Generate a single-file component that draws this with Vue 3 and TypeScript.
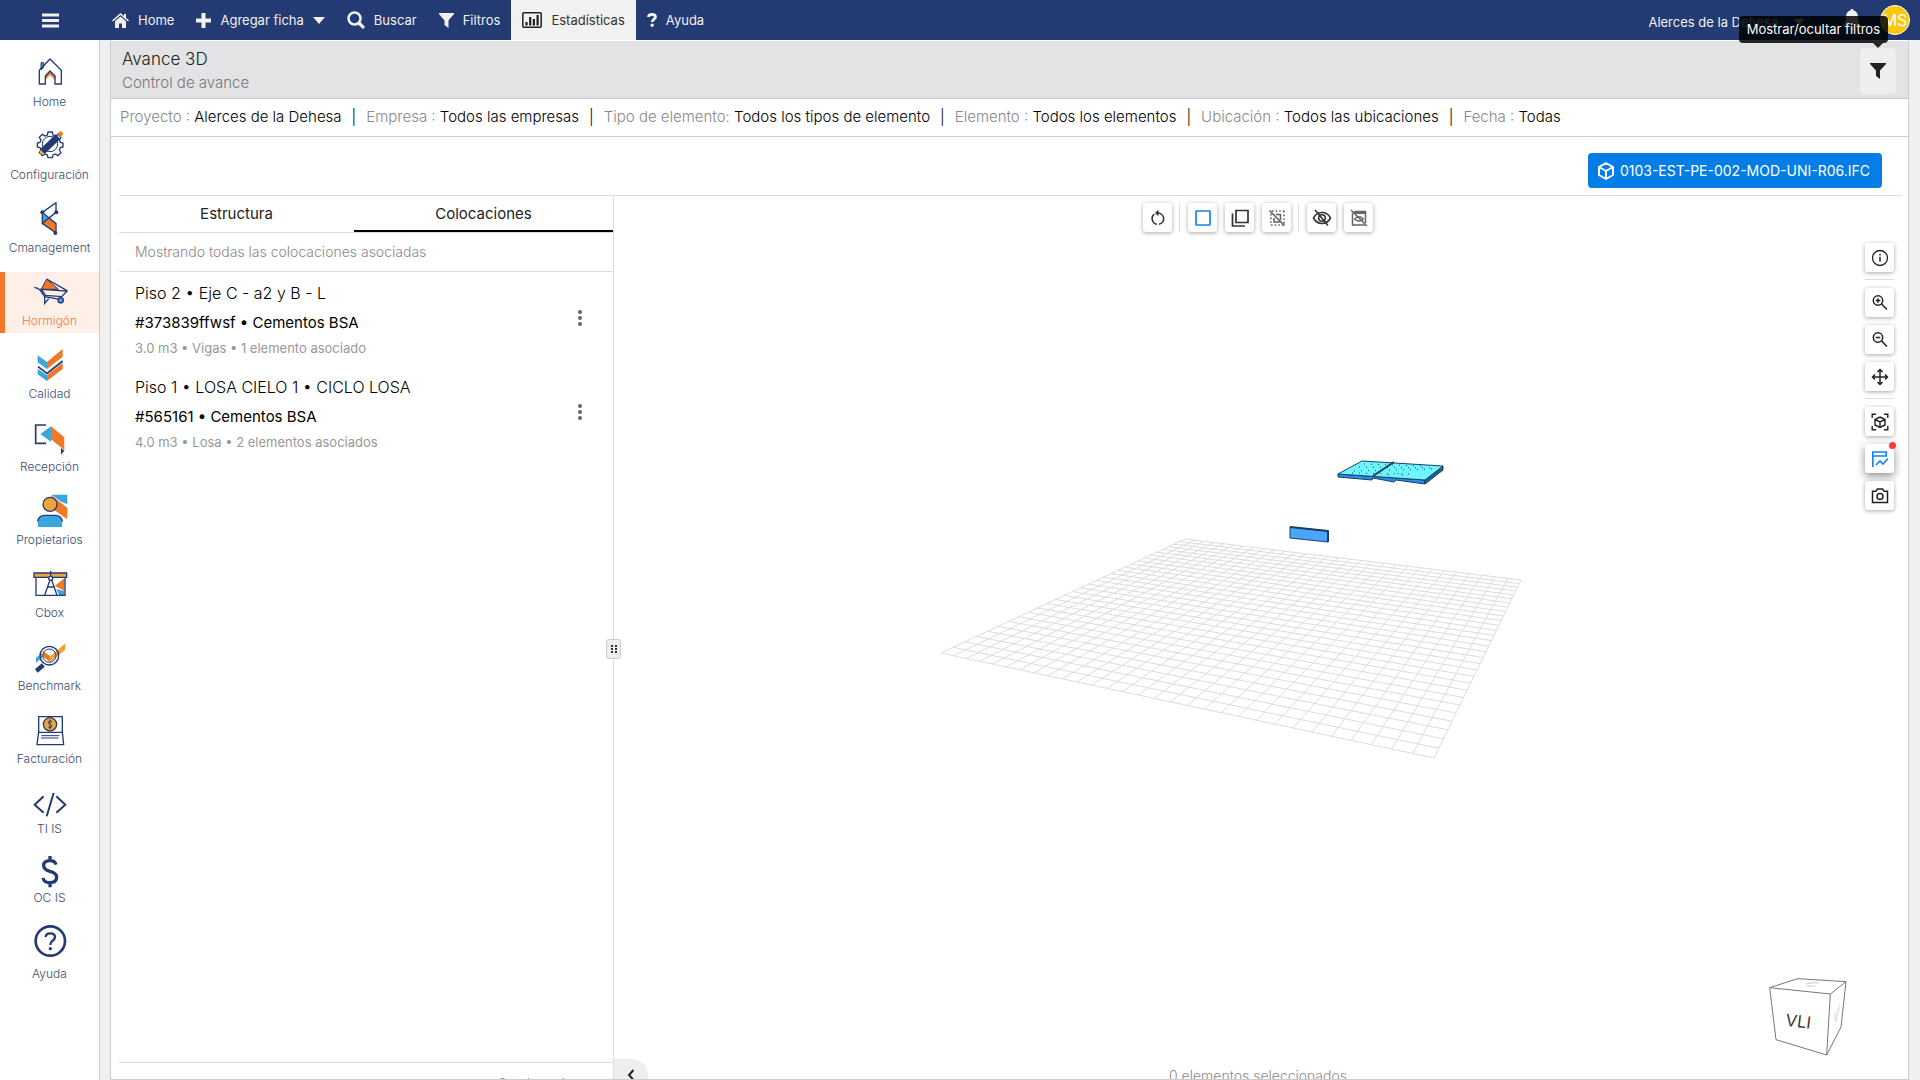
<script setup lang="ts">
import { ref } from 'vue'

interface FilterItem { label: string; value: string }
interface Placement { id: number; title: string; code: string; meta: string }
type Point = [number, number]

const filters: FilterItem[] = [
  { label: 'Proyecto :', value: 'Alerces de la Dehesa' },
  { label: 'Empresa :', value: 'Todos las empresas' },
  { label: 'Tipo de elemento:', value: 'Todos los tipos de elemento' },
  { label: 'Elemento :', value: 'Todos los elementos' },
  { label: 'Ubicación :', value: 'Todos las ubicaciones' },
  { label: 'Fecha :', value: 'Todas' },
]

const placements: Placement[] = [
  { id: 1, title: 'Piso 2 • Eje C - a2 y B - L', code: '#373839ffwsf • Cementos BSA', meta: '3.0 m3 • Vigas • 1 elemento asociado' },
  { id: 2, title: 'Piso 1 • LOSA CIELO 1 • CICLO LOSA', code: '#565161 • Cementos BSA', meta: '4.0 m3 • Losa • 2 elementos asociados' },
]

const activeTab = ref<'estructura' | 'colocaciones'>('colocaciones')

/* Projects a point of the unit square onto the floor plane seen in perspective. */
const floor: [Point, Point, Point, Point] = [[571, 343], [907, 384], [820, 562], [327, 457]]
function project(u: number, v: number): string {
  const [a, b, c, d] = floor
  const dx1 = b[0] - c[0], dx2 = d[0] - c[0], dx3 = a[0] - b[0] + c[0] - d[0]
  const dy1 = b[1] - c[1], dy2 = d[1] - c[1], dy3 = a[1] - b[1] + c[1] - d[1]
  const det = dx1 * dy2 - dx2 * dy1
  const g = (dx3 * dy2 - dx2 * dy3) / det
  const h = (dx1 * dy3 - dx3 * dy1) / det
  const w = g * u + h * v + 1
  const x = ((b[0] - a[0] + g * b[0]) * u + (d[0] - a[0] + h * d[0]) * v + a[0]) / w
  const y = ((b[1] - a[1] + g * b[1]) * u + (d[1] - a[1] + h * d[1]) * v + a[1]) / w
  return `${x.toFixed(1)} ${y.toFixed(1)}`
}
const cells = 30
const gridPath = Array.from({ length: cells + 1 }, (_, i) => {
  const t = i / cells
  return `M${project(t, 0)}L${project(t, 1)}M${project(0, t)}L${project(1, t)}`
}).join('')
</script>

<template>
  <div class="app">
    <header class="topbar">
      <button class="menu-btn" aria-label="Menú">
        <svg width="17" height="17" viewBox="0 0 17 17"><path d="M0 3h17M0 8.500h17M0 14h17" stroke="#f1f1f1" stroke-width="3" /></svg>
      </button>
      <nav class="topnav">
        <a href="#" class="nav-item">
          <svg width="17" height="15" viewBox="0 0 17 15"><path d="M8.500 0 0 7.500l1 1L8.500 2 16 8.500l1-1-3-2.700V1h-2v2zM8.500 3.500 3 8.300V15h4v-4.500h3V15h4V8.300z" fill="#f1f1f1" /></svg>
          <span>Home</span>
        </a>
        <a href="#" class="nav-item">
          <svg width="15" height="15" viewBox="0 0 15 15"><path d="M7.500 0v15M0 7.500h15" stroke="#f1f1f1" stroke-width="4" /></svg>
          <span>Agregar ficha</span>
          <svg width="12" height="7" viewBox="0 0 12 7"><path d="M0 0h12L6 7z" fill="#f1f1f1" /></svg>
        </a>
        <a href="#" class="nav-item">
          <svg width="18" height="18" viewBox="0 0 18 18" fill="none" stroke="#f1f1f1"><circle cx="7.500" cy="7.500" r="6" stroke-width="2.500" /><path d="m12 12 5 5" stroke-width="3.200" /></svg>
          <span>Buscar</span>
        </a>
        <a href="#" class="nav-item">
          <svg width="15" height="15" viewBox="0 0 15 15"><path d="M0 0h15v1L9.500 7.500V15l-4-3V7.500L0 1z" fill="#f1f1f1" /></svg>
          <span>Filtros</span>
        </a>
        <a href="#" class="nav-item current" aria-current="page">
          <svg width="20" height="16" viewBox="0 0 20 16" fill="none" stroke="#222"><rect x=".8" y=".8" width="18.400" height="14.400" rx="1" stroke-width="1.500" /><path d="M4.500 10v3.500M8.200 5v8.500M11.900 7v6.500M15.600 3v10.500" stroke-width="2.200" /></svg>
          <span>Estadísticas</span>
        </a>
        <a href="#" class="nav-item">
          <svg width="10" height="14" viewBox="0 0 10 14"><path d="M1.500 4C1.500 2.300 3 1.500 5 1.500S8.500 2.500 8.500 4c0 2-3.300 2.500-3.300 5" fill="none" stroke="#f1f1f1" stroke-width="2.800" /><circle cx="5.200" cy="12.300" r="1.700" fill="#f1f1f1" /></svg>
          <span>Ayuda</span>
        </a>
      </nav>
      <div class="account">
        <button class="project">
          <span>Alerces de la Dehesa</span>
          <svg width="10" height="6" viewBox="0 0 10 6"><path d="M0 0h10L5 6z" fill="#f1f1f1" /></svg>
        </button>
        <button class="bell" aria-label="Notificaciones">
          <svg width="20" height="22" viewBox="0 0 20 22"><path d="M10 0c1 0 1.600.7 1.600 1.500C14.500 2.200 16 4.500 16 8c0 5 1 7 4 9H0c3-2 4-4 4-9 0-3.500 1.500-5.800 4.400-6.500C8.400.7 9 0 10 0zM7 18.500h6a3 3 0 0 1-6 0z" fill="#f1f1f1" /></svg>
        </button>
        <button class="avatar">MS</button>
      </div>
    </header>

    <div class="body">
      <nav class="sidebar">
        <a href="#" class="side-item">
          <svg width="36" height="36" viewBox="95 48 108 108">
            <path d="M122 68h8v14l-8 7z" fill="#3aa6de" stroke="#233a72" stroke-width="3" />
            <path d="m149 92 16 15v14l-16-17-15 17v-14z" fill="#f07826" />
            <path d="m149 57 34 34v41h-19v-24l-15-15-14 15v24h-18V91z" fill="none" stroke="#233a72" stroke-width="4" />
          </svg>
          <span>Home</span>
        </a>
        <a href="#" class="side-item">
          <svg width="36" height="36" viewBox="95 269 108 108">
            <path d="m143 278 13 0 2 9 7 3 8-5 9 9-5 8 3 7 8 2v12l-8 2-3 7 5 8-9 9-8-5-7 3-2 8h-13l-2-8-7-3-8 5-9-9 5-8-3-7-8-2v-12l8-2 3-7-5-8 9-9 8 5 7-3z" fill="#fff" stroke="#233a72" stroke-width="4" />
            <circle cx="149" cy="314" r="23" fill="none" stroke="#233a72" stroke-width="3" />
            <path d="m126 337 47-45" stroke="#233a72" stroke-width="20" />
            <path d="m172 283 7-7q3-1 6 2l3 5q0 3-2 5l-6 6z" fill="#f07826" />
            <path d="m119 331 14 14-15 0z" fill="#eba53a" />
          </svg>
          <span>Configuración</span>
        </a>
        <a href="#" class="side-item">
          <svg width="36" height="36" viewBox="95 484 108 108">
            <path d="m125 516 20 16-20 16z" fill="#3aa6de" />
            <path d="m146 533 20 16v28l-40-29z" fill="#f07826" />
            <path d="m126 515 41-29v29l-41 33v-33l41 34v28l-41-29" fill="none" stroke="#233a72" stroke-width="4" />
            <g fill="#233a72"><circle cx="126" cy="515" r="6" /><circle cx="168" cy="515" r="6" /><circle cx="165" cy="577" r="6" /></g>
          </svg>
          <span>Cmanagement</span>
        </a>
        <a href="#" class="side-item selected">
          <svg width="36" height="36" viewBox="95 705 108 108">
            <path d="m139 717 35 31-51 0z" fill="#f07826" stroke="#233a72" stroke-width="3" />
            <path d="M102 742q12 2 17 8l14 20 46 8M123 748l77 5-16 17-48-4zM139 717l61 35M133 772v18l12-14" fill="none" stroke="#233a72" stroke-width="4" />
            <circle cx="181" cy="781" r="8" fill="#3aa6de" stroke="#233a72" stroke-width="4" />
          </svg>
          <span>Hormigón</span>
        </a>
        <a href="#" class="side-item">
          <svg width="36" height="36" viewBox="95 923 108 108">
            <path d="m112 945 28 20v21l-28-20zM112 985l28 20v17l-28-20z" fill="#3aa6de" />
            <path d="m140 965 47-39v23l-47 37zM140 1004l47-37v19l-47 36z" fill="#f07826" />
            <path d="m113 979 27 20 47-37" fill="none" stroke="#233a72" stroke-width="5" />
          </svg>
          <span>Calidad</span>
        </a>
        <a href="#" class="side-item">
          <svg width="36" height="36" viewBox="95 1141 108 108">
            <path d="M137 1153h-31v55h31" fill="none" stroke="#233a72" stroke-width="5" />
            <path d="m120 1180 32-23v46z" fill="#3aa6de" />
            <path d="m152 1157 40 33v38l-40-32z" fill="#f07826" />
            <path d="m182 1222 10 8-10 12z" fill="#233a72" />
          </svg>
          <span>Recepción</span>
        </a>
        <a href="#" class="side-item">
          <svg width="36" height="36" viewBox="95 131 108 108">
            <path d="M153 133h48v29l-18-8z" fill="#3aa6de" />
            <path d="m153 135 48 37v35l-45-32z" fill="#f07826" />
            <circle cx="149" cy="162" r="21" fill="#eba53a" stroke="#233a72" stroke-width="4" />
            <path d="M113 230v-14q0-21 21-21h30q21 0 21 21v14z" fill="#3aa6de" />
            <path d="M112 214q2-19 22-19h30q20 0 22 19" fill="none" stroke="#233a72" stroke-width="4" />
          </svg>
          <span>Propietarios</span>
        </a>
        <a href="#" class="side-item">
          <svg width="36" height="36" viewBox="95 351 108 108">
            <path d="m163 408 29-23v37z" fill="#f07826" /><path d="m168 417 24 6v12h-16z" fill="#3aa6de" />
            <path d="M107 382h87v54h-87z" fill="none" stroke="#233a72" stroke-width="4" />
            <path d="M101 369h98v13h-98z" fill="#eba53a" stroke="#233a72" stroke-width="4" />
            <path d="M151 363v16m-2 11-16 46m21-46 16 46m-29-25h20" stroke="#233a72" stroke-width="4" />
            <circle cx="151" cy="385" r="6" fill="#fff" stroke="#233a72" stroke-width="4" />
          </svg>
          <span>Cbox</span>
        </a>
        <a href="#" class="side-item">
          <svg width="36" height="36" viewBox="95 569 108 108">
            <path d="m107 622 18-13v14l-18 14z" fill="#3aa6de" /><path d="m128 602 22 16v17l-22-16z" fill="#f07826" /><path d="m150 618 45-39v19l-45 37z" fill="#eba53a" />
            <g fill="none" stroke="#233a72" stroke-width="4"><circle cx="147" cy="616" r="28" /><circle cx="147" cy="616" r="20" stroke-width="3" /></g>
            <path d="m129 644-21 18" stroke="#233a72" stroke-width="13" />
          </svg>
          <span>Benchmark</span>
        </a>
        <a href="#" class="side-item">
          <svg width="36" height="36" viewBox="95 789 108 108">
            <path d="M115 800h71v46l4 38h-80l5-38zM115 847h71" fill="none" stroke="#233a72" stroke-width="4" />
            <circle cx="149" cy="823" r="20" fill="#eba53a" stroke="#233a72" stroke-width="4" />
            <path d="M155 815q-6-4-10 0t4 8 4 8-9 0M149 809v28M123 857h54M122 864h52" fill="none" stroke="#233a72" stroke-width="3" />
          </svg>
          <span>Facturación</span>
        </a>
        <a href="#" class="side-item short">
          <svg width="36" height="33" viewBox="95 258 108 99"><path d="m130 289-27 25 27 24M168 289l27 25-27 24M160 279l-21 70" fill="none" stroke="#233a72" stroke-width="6" /></svg>
          <span>TI IS</span>
        </a>
        <a href="#" class="side-item short">
          <svg width="36" height="33" viewBox="95 467 108 99"><path d="M167 496q-3-12-18-12-19 0-19 15 0 11 19 17 20 5 20 18 0 16-21 16-17 0-20-14M149 470v14M149 550v14" fill="none" stroke="#233a72" stroke-width="10" /></svg>
          <span>OC IS</span>
        </a>
        <a href="#" class="side-item tall">
          <svg width="36" height="40" viewBox="95 672 108 120">
            <circle cx="150" cy="723" r="44" fill="none" stroke="#233a72" stroke-width="8" />
            <path d="M136 711q0-11 14-11t14 11q0 7-8 12-6 4-6 12" fill="none" stroke="#233a72" stroke-width="7" /><circle cx="150" cy="746" r="5" fill="#233a72" />
          </svg>
          <span>Ayuda</span>
        </a>
      </nav>

      <main class="page">
        <div class="page-head">
          <div>
            <h1>Avance 3D</h1>
            <p>Control de avance</p>
          </div>
          <button class="filter-toggle" aria-label="Mostrar/ocultar filtros" aria-describedby="filter-tip">
            <svg width="16" height="16" viewBox="0 0 16 16"><path d="M0 0h16v1l-6 6.500V16l-4-3V7.500L0 1z" fill="#222" /></svg>
            <span id="filter-tip" class="tooltip" role="tooltip">Mostrar/ocultar filtros</span>
          </button>
        </div>

        <ul class="filter-bar">
          <li v-for="f in filters" :key="f.label"><span class="muted">{{ f.label }}</span> {{ f.value }}</li>
        </ul>

        <div class="content">
          <div class="model-row">
            <button class="model-btn">
              <svg width="16" height="18" viewBox="0 0 16 18" fill="none" stroke="#fff" stroke-width="2" stroke-linejoin="round"><path d="m8 1 7 4v8l-7 4-7-4V5zM1 5l7 4 7-4M8 9v8" /></svg>
              <span>0103-EST-PE-002-MOD-UNI-R06.IFC</span>
            </button>
          </div>

          <div class="workspace">
            <section class="panel">
              <div class="tabs" role="tablist">
                <button role="tab" class="tab" :class="{ active: activeTab === 'estructura' }" @click="activeTab = 'estructura'">Estructura</button>
                <button role="tab" class="tab wide" :class="{ active: activeTab === 'colocaciones' }" @click="activeTab = 'colocaciones'">Colocaciones</button>
              </div>
              <p class="hint">Mostrando todas las colocaciones asociadas</p>
              <ul class="placements">
                <li v-for="p in placements" :key="p.id">
                  <div>
                    <h2>{{ p.title }}</h2>
                    <p class="code">{{ p.code }}</p>
                    <p class="meta">{{ p.meta }}</p>
                  </div>
                  <button class="kebab" aria-label="Opciones">
                    <svg width="4" height="16" viewBox="0 0 4 16" fill="#666"><circle cx="2" cy="2" r="2" /><circle cx="2" cy="8" r="2" /><circle cx="2" cy="14" r="2" /></svg>
                  </button>
                </li>
              </ul>
              <p class="count">2 colocaciones</p>
              <button class="splitter" aria-label="Redimensionar">
                <svg width="6" height="8" viewBox="0 0 6 8" fill="#333"><path d="M0 0h2v2H0zM4 0h2v2H4zM0 3h2v2H0zM4 3h2v2H4zM0 6h2v2H0zM4 6h2v2H4z" /></svg>
              </button>
            </section>

            <section class="viewer">
              <svg class="scene" viewBox="0 0 1294 883" preserveAspectRatio="xMidYMin meet">
                <path :d="gridPath" fill="none" stroke="#dcdcdc" stroke-width="1" />
                <g stroke="#17405f" stroke-width="1" stroke-linejoin="round">
                  <path d="M724 278v3l34 3 1-2 21 4 2-2 29 4v-4z" fill="#2b8ae8" />
                  <path d="M811 284l18-14v4l-18 14z" fill="#235e96" />
                  <path d="M724 278 748 265l81 5-18 14z" fill="#6ff5ff" />
                  <path d="m759 280 21-14" stroke-width="2" />
                  <path d="M676 331l38 4v11l-38-4z" fill="#4aa5ff" />
                  <path d="M676 331l38 4v11" fill="none" stroke-width="2" />
                </g>
                <path d="M740 275l78-2M745 271l75 1M750 268l60 2M738 277l60 1M774 279h5M784 277v3M788 279h3" stroke="#17405f" stroke-width="1" stroke-dasharray="1 6" />
              </svg>

              <div class="toolbar">
                <button class="tool" aria-label="Reiniciar vista"><svg width="18" height="18" viewBox="0 0 18 18"><path d="M5.300 5.200A5.700 5.700 0 0 0 8 15.300M10 15.300A5.700 5.700 0 0 0 9 4" fill="none" stroke="#333" stroke-width="1.600" /><path d="M9.500.8v6.400L6 4z" fill="#333" /></svg></button>
                <i class="rule"></i>
                <button class="tool" aria-label="Selección simple"><svg width="18" height="18" viewBox="0 0 18 18"><rect x="2" y="2" width="14" height="14" rx=".5" fill="none" stroke="#1283f0" stroke-width="1.700" /></svg></button>
                <button class="tool" aria-label="Selección múltiple"><svg width="18" height="18" viewBox="0 0 18 18"><path d="M5 1.500h12v12H5zM1.500 4.500v12.500H14" fill="none" stroke="#333" stroke-width="1.700" /></svg></button>
                <button class="tool faded" aria-label="Quitar selección"><svg width="18" height="18" viewBox="0 0 18 18" fill="none" stroke="#333" stroke-width="1.600"><path d="M4 2h13M16 2v14M3 16h13M3 5v11" stroke-dasharray="1.600 2" /><path d="M6 9v4h6M8 5.500h4.500V11M1.500 1.500l15 15" /></svg></button>
                <i class="rule"></i>
                <button class="tool" aria-label="Ocultar"><svg width="20" height="18" viewBox="0 0 20 18" fill="none" stroke="#333" stroke-width="1.600"><path d="M1.500 9Q4.500 3.500 10 3.500T18.500 9Q15.500 14.500 10 14.500T1.500 9zM3 1l13 15.500" /><circle cx="10" cy="9" r="3.300" /></svg></button>
                <button class="tool faded" aria-label="Ocultar otros"><svg width="18" height="18" viewBox="0 0 18 18" fill="none" stroke="#333"><path d="M2.500 4v12h12.500M15.500 14V2.500H5" stroke-width="1.500" /><path d="M4 3.500h12" stroke-width="3" /><path d="m1 1 16 16" stroke-width="1.600" /><path d="M4.500 10Q9 5.500 13.500 10 9 14 4.500 10z" stroke-width="1.200" /></svg></button>
              </div>

              <div class="toolbar side">
                <button class="tool" aria-label="Información"><svg width="18" height="18" viewBox="0 0 18 18" fill="none" stroke="#222"><circle cx="9" cy="9" r="7.500" stroke-width="1.300" /><path d="M9 7.800v5M9 5v1.600" stroke-width="1.500" /></svg></button>
                <i class="rule"></i>
                <button class="tool" aria-label="Acercar"><svg width="18" height="18" viewBox="0 0 18 18" fill="none" stroke="#222"><circle cx="7" cy="6.500" r="4.700" stroke-width="1.500" /><path d="m10.500 10 5.500 5.500M7 4.200v4.600M4.700 6.500h4.600" stroke-width="1.500" /></svg></button>
                <button class="tool" aria-label="Alejar"><svg width="18" height="18" viewBox="0 0 18 18" fill="none" stroke="#222"><circle cx="7" cy="6.500" r="4.700" stroke-width="1.500" /><path d="m10.500 10 5.500 5.500M4.700 6.500h4.600" stroke-width="1.500" /></svg></button>
                <button class="tool" aria-label="Mover"><svg width="18" height="18" viewBox="0 0 18 18" fill="none" stroke="#222" stroke-width="1.500"><path d="M9 2v14M2 9h14M6.500 4 9 1.500 11.500 4M6.500 14 9 16.500l2.500-2.500M4 6.500 1.500 9 4 11.500M14 6.500 16.500 9 14 11.500" /></svg></button>
                <i class="rule"></i>
                <button class="tool" aria-label="Enfocar"><svg width="18" height="18" viewBox="0 0 18 18" fill="none" stroke="#222" stroke-width="1.400"><path d="m9 4 5 2.500v5.500L9 14.500 4 12V6.500zM4 6.500 9 9l5-2.500M9 9v5.500M1.200 5V1.200H5M13 1.200h3.800V5M1.200 13v3.800H5M13 16.800h3.800V13" /></svg></button>
                <button class="tool raised" aria-label="Avance"><svg width="18" height="18" viewBox="0 0 18 18" fill="none" stroke="#1283f0" stroke-width="1.700"><path d="M1.800 17V2h13.400v4H1.800M5 15l4-4 3 3 5-5.500" /></svg><i class="dot"></i></button>
                <button class="tool" aria-label="Captura"><svg width="18" height="18" viewBox="0 0 18 18" fill="none" stroke="#222" stroke-width="1.500"><path d="M1.500 4.200h3.300L6.500 2h5l1.700 2.200h3.300v11.300h-15z" /><circle cx="9" cy="9.500" r="3" /></svg></button>
              </div>

              <svg class="cube" width="78" height="78" viewBox="86 83 234 234">
                <path d="M88 112 172 85l145 9-15 136-43 84-152-46zM88 112l182 19 47-37M270 131l-11 183" fill="#fff" stroke="#777" stroke-width="3" stroke-linejoin="round" />
                <path d="M198 101q18-6 38-3M200 107h26" fill="none" stroke="#ccc" stroke-width="3" /><path d="m284 184 3 32 11-52M281 206l16-32" fill="none" stroke="#ddd" stroke-width="3" />
                <text x="134" y="226" transform="rotate(7 134 226)" font-size="50" fill="#333">VLI</text>
              </svg>

              <button class="collapse" aria-label="Contraer panel"><svg width="8" height="12" viewBox="0 0 8 12"><path d="M6.500 1 2 6l4.500 5" fill="none" stroke="#222" stroke-width="2" /></svg></button>
              <p class="selection">0 elementos seleccionados</p>
            </section>
          </div>
        </div>
      </main>
    </div>
  </div>
</template>

<style>
body { background: #f0f0f0; overflow: hidden; }
</style>

<style scoped>
* { box-sizing: border-box; }
.app { height: 100vh; display: flex; flex-direction: column; font-family: Inter, "Open Sans", sans-serif; color: #222; overflow: hidden; }
button { font: inherit; color: inherit; border: 0; background: none; padding: 0; display: flex; align-items: center; justify-content: center; }
a { color: inherit; text-decoration: none; }
h1, h2, p, ul { margin: 0; padding: 0; font-weight: 400; list-style: none; }
svg { flex: none; }

.topbar { height: 40px; flex: none; display: flex; background: #233a72; color: #f1f1f1; font-size: 13px; }
.menu-btn { width: 100px; }
.topnav { display: flex; padding-left: 1px; }
.nav-item { display: flex; align-items: center; gap: 9px; padding: 0 11px; }
.nav-item.current { background: #f1f1f1; color: #333; }
.account { margin-left: auto; display: flex; align-items: center; padding-right: 10px; }
.project { gap: 16px; margin-right: 38px; padding-top: 4px; }
.bell { margin-right: 18px; }
.avatar { width: 30px; height: 30px; border-radius: 50%; background: #f9c80e; border: 1px solid #fff; color: #fff; font-size: 16px; }

.body { flex: 1; min-height: 0; display: flex; }
.sidebar { width: 100px; flex: none; background: #fff; border-right: 1px solid #ccc; padding-top: 13px; color: #3a4b72; font-size: 12px; font-weight: 300; }
.side-item { display: flex; flex-direction: column; align-items: center; height: 61px; padding-top: 3px; margin-bottom: 12px; line-height: 20px; }
.side-item.short { height: 57px; }
.side-item.tall { height: 65px; }
.side-item.selected { background: #fef0e9; color: #f37a35; border-left: 5px solid #f5762b; padding-right: 5px; }

.page { flex: 1; min-width: 0; display: flex; flex-direction: column; margin: 0 11px 0 10px; border: 1px solid #ccc; border-top-color: #fff; background: #fff; }
.page-head { display: flex; justify-content: space-between; align-items: center; height: 57px; flex: none; background: #e3e3e5; padding: 3px 12px 0 11px; border-bottom: 1px solid #ddd; }
.page-head h1 { font-size: 17px; font-weight: 300; line-height: 23px; color: #222; }
.page-head p { font-size: 15px; font-weight: 300; line-height: 23px; color: #777; }
.filter-toggle { position: relative; width: 36px; height: 46px; background: #eee; border-radius: 3px; }
.tooltip { position: absolute; right: 8px; bottom: 51px; height: 27px; padding: 0 8px; border-radius: 4px; background: rgba(0, 0, 0, .84); color: #fff; font-size: 13px; line-height: 27px; white-space: nowrap; z-index: 2; }
.tooltip::after { content: ""; position: absolute; top: 100%; right: 5px; border: 5px solid transparent; border-top-color: rgba(0, 0, 0, .84); border-bottom: 0; }

.filter-bar { display: flex; height: 39px; flex: none; border-top: 1px solid #ccc; border-bottom: 1px solid #ccc; padding-left: 9px; font-size: 15px; font-weight: 300; line-height: 36px; white-space: nowrap; color: #000; }
.filter-bar li + li::before { content: "|"; margin: 0 10px; }
.muted { color: #888; }

.content { flex: 1; min-height: 0; display: flex; flex-direction: column; padding-left: 8px; }
.model-row { height: 59px; flex: none; display: flex; justify-content: flex-end; align-items: center; padding: 9px 20px 0 0; border-bottom: 1px solid #ddd; margin-right: 6px; }
.model-btn { height: 35px; padding: 0 12px 0 10px; gap: 6px; border-radius: 4px; background: #047ee6; color: #fff; font-size: 14px; }

.workspace { flex: 1; min-height: 0; display: flex; }
.panel { position: relative; width: 495px; flex: none; display: flex; flex-direction: column; border-right: 1px solid #ddd; }
.tabs { display: flex; height: 37px; flex: none; border-bottom: 1px solid #ddd; }
.tab { flex: 235; font-size: 15px; padding-bottom: 2px; }
.tab.wide { flex: 259; }
.tab.active { border-bottom: 2px solid #000; padding-bottom: 0; }
.hint { height: 39px; flex: none; padding-left: 16px; border-bottom: 1px solid #ddd; font-size: 14px; font-weight: 300; line-height: 38px; color: #888; }
.placements { flex: 1; padding-top: 3px; }
.placements li { display: flex; justify-content: space-between; align-items: center; height: 94px; padding: 0 31px 8px 16px; }
.placements h2 { font-size: 16px; font-weight: 300; line-height: 32px; color: #000; }
.code { font-size: 15px; line-height: 28px; color: #000; }
.meta { font-size: 13px; line-height: 22px; color: #999; }
.count { height: 17px; flex: none; overflow: hidden; border-top: 1px solid #ddd; padding-right: 16px; text-align: right; font-size: 14px; font-weight: 300; line-height: 42px; color: #888; }
.splitter { position: absolute; right: -8px; top: 443px; width: 15px; height: 20px; background: #eee; border: 1px solid #ccc; border-radius: 3px; z-index: 1; }

.viewer { position: relative; flex: 1; min-width: 0; }
.scene { position: absolute; left: 0; top: 0; width: 100%; height: 100%; }
.toolbar { position: absolute; left: 0; right: 6px; top: 7px; display: flex; justify-content: center; gap: 8px; }
.toolbar.side { left: auto; right: 14px; top: 47px; flex-direction: column; }
.tool { position: relative; width: 29px; height: 29px; border-radius: 3px; background: #fff; box-shadow: 0 1px 4px rgba(0, 0, 0, .35); }
.tool.faded svg { opacity: .75; }
.tool.raised { box-shadow: 0 3px 9px rgba(0, 0, 0, .45); }
.rule { width: 1px; margin-left: -1px; background: #ddd; }
.side .rule { width: 29px; height: 1px; margin: -1px 0 0; }
.dot { position: absolute; right: -2px; top: -2px; width: 7px; height: 7px; border-radius: 50%; background: #fb3c33; }
.cube { position: absolute; right: 61px; bottom: 23px; }
.collapse { position: absolute; left: 0; bottom: -12px; width: 34px; height: 32px; background: #eee; border-radius: 0 16px 16px 0; clip-path: inset(0 0 12px 0); }
.selection { position: absolute; left: 0; right: 6px; bottom: 0; height: 12px; overflow: hidden; text-align: center; font-size: 14px; font-weight: 300; line-height: 18px; color: #888; }
</style>
